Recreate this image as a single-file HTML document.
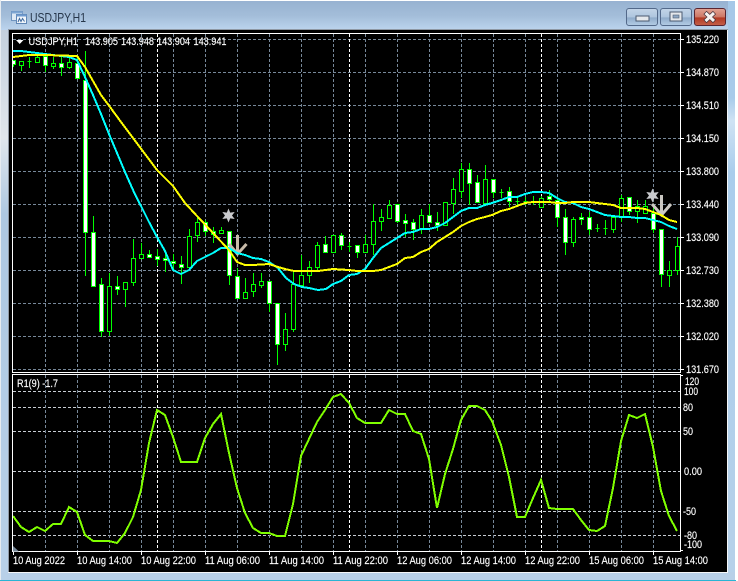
<!DOCTYPE html>
<html lang="en">
<head>
<meta charset="utf-8">
<title>USDJPY,H1</title>
<style>
html,body{margin:0;padding:0;background:#fff;width:738px;height:581px;overflow:hidden}
svg{display:block;position:absolute;left:0;top:0}
text{font-family:"Liberation Sans",sans-serif;font-size:11px;fill:#fff;stroke:#fff;stroke-width:.15}
</style>
</head>
<body>
<svg width="738" height="581" viewBox="0 0 738 581" xmlns="http://www.w3.org/2000/svg">
<defs>
<linearGradient id="tb" x1="0" y1="0" x2="0" y2="1"><stop offset="0" stop-color="#97b2d1"/><stop offset=".5" stop-color="#a3bdd9"/><stop offset="1" stop-color="#bcd4ee"/></linearGradient>
<linearGradient id="lf" x1="0" y1="0" x2="0" y2="1"><stop offset="0" stop-color="#c4d0dd"/><stop offset=".2" stop-color="#e0e6ec"/><stop offset=".34" stop-color="#aec8e2"/><stop offset="1" stop-color="#b8d0e8"/></linearGradient>
<linearGradient id="rf" x1="0" y1="0" x2="0" y2="1"><stop offset="0" stop-color="#a5c8e8"/><stop offset=".17" stop-color="#a8cbea"/><stop offset=".21" stop-color="#cfe3f4"/><stop offset=".3" stop-color="#a9cdec"/><stop offset="1" stop-color="#b6d1ea"/></linearGradient>
<linearGradient id="b1" x1="0" y1="0" x2="0" y2="1"><stop offset="0" stop-color="#c3d5e8"/><stop offset=".5" stop-color="#aec5de"/><stop offset=".55" stop-color="#8fabca"/><stop offset="1" stop-color="#b4cde6"/></linearGradient>
<linearGradient id="b2" x1="0" y1="0" x2="0" y2="1"><stop offset="0" stop-color="#e2a495"/><stop offset=".5" stop-color="#cd7765"/><stop offset=".55" stop-color="#b23a24"/><stop offset="1" stop-color="#c4604a"/></linearGradient>
<clipPath id="cm"><rect x="13" y="34" width="667" height="338"/></clipPath>
<clipPath id="ci"><rect x="13" y="375" width="667" height="176"/></clipPath>
</defs>

<!-- window frame -->
<rect x="0" y="0" width="738" height="581" fill="#fff"/>
<path d="M3 1H731Q735 1 735 5V580H1V4Q1 1 3 1Z" fill="#b8d0e8"/>
<rect x="1" y="1" width="734" height="29" fill="url(#tb)"/>
<rect x="1" y="30" width="8" height="542" fill="url(#lf)"/>
<rect x="728" y="1" width="7" height="571" fill="url(#rf)"/>
<rect x="0" y="0" width="1" height="580" fill="#e6ebf0"/>
<rect x="1" y="572" width="734" height="8" fill="#b8d0e8"/>
<rect x="0" y="580" width="736" height="1" fill="#2ab4d4"/>

<!-- client area -->
<rect x="8" y="29" width="720" height="544" fill="#8f98a4"/>
<rect x="727" y="30" width="1" height="542" fill="#f4f6f8"/>
<rect x="8" y="572" width="720" height="1" fill="#f4f6f8"/>
<rect x="9" y="30" width="718" height="542" fill="#000"/>

<!-- title icon -->
<g>
<rect x="11.5" y="11.5" width="11" height="9" fill="#dfe9f5" stroke="#6f94c0"/>
<rect x="11.5" y="11.5" width="11" height="2" fill="#7ea6d4"/>
<rect x="16.5" y="14.5" width="10" height="9" fill="#f2f6fb" stroke="#5f86b5"/>
<rect x="16.5" y="14.5" width="10" height="2" fill="#6f9bd0"/>
<path d="M18 22L19.5 18.5L21 21.5L22.5 18.5L24.5 21.5" fill="none" stroke="#3f6a9f" stroke-width="1"/>
</g>
<text x="30" y="22" textLength="56" lengthAdjust="spacingAndGlyphs" style="font-size:13px;fill:#26364a;stroke:none">USDJPY,H1</text>

<!-- buttons -->
<rect x="626.5" y="8.5" width="31" height="17" rx="2.5" fill="url(#b1)" stroke="#53698a"/>
<rect x="636" y="16" width="13" height="5" fill="#e4e8ec" stroke="#4b5a70"/>
<rect x="660.5" y="8.5" width="31" height="17" rx="2.5" fill="url(#b1)" stroke="#53698a"/>
<rect x="670" y="12" width="12" height="9" fill="#e4e8ec" stroke="#4b5a70"/>
<rect x="673" y="15" width="6" height="3" fill="#8ea7c4" stroke="#4b5a70" stroke-width=".6"/>
<rect x="694.5" y="8.5" width="31" height="17" rx="2.5" fill="url(#b2)" stroke="#5a2530"/>
<path d="M705 12.5L714.5 21.5M714.5 12.5L705 21.5" stroke="#45303a" stroke-width="4.5" fill="none"/>
<path d="M705.5 13L714 21M714 13L705.5 21" stroke="#f6f2f0" stroke-width="3" fill="none"/>

<!-- chart frames -->
<g fill="none" stroke="#fff" stroke-width="1" shape-rendering="crispEdges">
<rect x="12.5" y="33.5" width="668" height="339"/>
<rect x="12.5" y="374.5" width="668" height="177"/>
</g>

<!-- grid main -->
<g clip-path="url(#cm)" shape-rendering="crispEdges" fill="none" stroke-width="1">
<path stroke="#778899" stroke-dasharray="3 2" d="M13 39.5H680M13 72.5H680M13 105.5H680M13 138.5H680M13 171.5H680M13 204.5H680M13 237.5H680M13 270.5H680M13 303.5H680M13 336.5H680M13 369.5H680"/>
<path stroke="#778899" stroke-dasharray="3 2" d="M45.5 34V372M77.5 34V372M109.5 34V372M141.5 34V372M173.5 34V372M205.5 34V372M237.5 34V372M269.5 34V372M301.5 34V372M333.5 34V372M365.5 34V372M397.5 34V372M429.5 34V372M461.5 34V372M493.5 34V372M525.5 34V372M557.5 34V372M589.5 34V372M621.5 34V372M653.5 34V372"/>
<path stroke="#fff" stroke-dasharray="3 2" d="M157.5 34V372M349.5 34V372M541.5 34V372"/>
</g>

<!-- candles -->
<g clip-path="url(#cm)" shape-rendering="crispEdges" stroke="#00ff00" stroke-width="1">
<path fill="none" d="M13.5 60V67M21.5 61V71M29.5 57V68M37.5 52V62M45.5 56V72M53.5 57V69M61.5 57V76M69.5 57V69M77.5 56V78M85.5 51V276M93.5 216V287M101.5 278V337M109.5 273V336M117.5 276V295M125.5 282V307M133.5 239V286M141.5 243V258M149.5 250V258M157.5 249V266M165.5 250V272M173.5 254V270M181.5 256V284M189.5 229V267M197.5 217V242M205.5 220V236M213.5 227V243M221.5 227V233M229.5 231V285M237.5 268V299M245.5 278V298M253.5 273V297M261.5 273V288M269.5 281V312M277.5 303V365M285.5 313V351M293.5 272V332M301.5 255V288M309.5 261V283M317.5 242V270M325.5 236V252M333.5 235V252M341.5 233V250M349.5 242V252M357.5 245V258M365.5 235V252M373.5 204V255M381.5 209V231M389.5 200V218M397.5 204V223M405.5 214V237M413.5 219V240M421.5 209V234M429.5 204V222M437.5 212V231M445.5 202V225M453.5 178V214M461.5 163V198M469.5 163V205M477.5 175V202M485.5 165V203M493.5 179V198M501.5 189V198M509.5 187V207M517.5 197V205M525.5 197V205M533.5 196V205M541.5 196V207M549.5 190V203M557.5 197V227M565.5 209V255M573.5 217V247M581.5 213V225M589.5 212V235M597.5 224V232M605.5 220V235M613.5 215V233M621.5 195V222M629.5 197V215M637.5 200V223M645.5 200V213M653.5 205V233M661.5 229V287M669.5 261V287M677.5 237V275"/>
<path fill="#000" d="M19.5 61.5h4v4h-4zM35.5 57.5h4v5h-4zM51.5 63.5h4v3h-4zM67.5 62.5h4v5h-4zM107.5 286.5h4v45h-4zM123.5 282.5h4v7h-4zM131.5 258.5h4v24h-4zM139.5 254.5h4v4h-4zM187.5 236.5h4v31h-4zM195.5 222.5h4v13h-4zM219.5 230.5h4v3h-4zM243.5 292.5h4v6h-4zM251.5 284.5h4v7h-4zM259.5 281.5h4v4h-4zM283.5 329.5h4v15h-4zM291.5 284.5h4v45h-4zM299.5 275.5h4v10h-4zM307.5 267.5h4v8h-4zM315.5 245.5h4v22h-4zM331.5 235.5h4v17h-4zM363.5 244.5h4v8h-4zM371.5 221.5h4v23h-4zM379.5 217.5h4v4h-4zM387.5 205.5h4v13h-4zM419.5 215.5h4v14h-4zM443.5 202.5h4v23h-4zM451.5 189.5h4v14h-4zM459.5 169.5h4v22h-4zM483.5 179.5h4v24h-4zM539.5 198.5h4v9h-4zM571.5 219.5h4v23h-4zM611.5 217.5h4v12h-4zM619.5 198.5h4v19h-4zM635.5 206.5h4v5h-4zM643.5 206.5h4v7h-4zM667.5 270.5h4v5h-4zM675.5 246.5h4v24h-4z"/>
<path fill="none" d="M27.5 61.5h4M347.5 246.5h4M499.5 192.5h4M515.5 201.5h4M523.5 201.5h4M531.5 201.5h4M595.5 228.5h4M603.5 228.5h4"/>
<path fill="#fff" d="M11.5 60.5h4v4h-4zM43.5 56.5h4v9h-4zM59.5 63.5h4v4h-4zM75.5 63.5h4v15h-4zM83.5 80.5h4v152h-4zM91.5 232.5h4v54h-4zM99.5 284.5h4v47h-4zM115.5 286.5h4v3h-4zM147.5 254.5h4v3h-4zM155.5 256.5h4v3h-4zM163.5 258.5h4v2h-4zM171.5 261.5h4v2h-4zM179.5 264.5h4v3h-4zM203.5 222.5h4v9h-4zM211.5 231.5h4v3h-4zM227.5 231.5h4v44h-4zM235.5 276.5h4v22h-4zM267.5 281.5h4v22h-4zM275.5 303.5h4v41h-4zM323.5 244.5h4v8h-4zM339.5 235.5h4v10h-4zM355.5 245.5h4v7h-4zM395.5 204.5h4v17h-4zM403.5 220.5h4v3h-4zM411.5 222.5h4v7h-4zM427.5 215.5h4v7h-4zM435.5 222.5h4v3h-4zM467.5 169.5h4v14h-4zM475.5 182.5h4v20h-4zM491.5 179.5h4v13h-4zM507.5 191.5h4v10h-4zM547.5 196.5h4v3h-4zM555.5 200.5h4v17h-4zM563.5 217.5h4v25h-4zM579.5 217.5h4v2h-4zM587.5 217.5h4v12h-4zM627.5 197.5h4v14h-4zM651.5 213.5h4v16h-4zM659.5 229.5h4v45h-4z"/>
</g>

<!-- markers -->
<g fill="none" stroke-width="3">
<path stroke="#c8bba9" d="M237.5 235V254M229 244L237.5 254L246.5 244"/>
<path stroke="#cbc8c3" d="M661.5 195V215M652 204L661.5 215L671 204"/>
</g>
<g fill="#c9cacd">
<path d="M228.5 208.5L230.2 212.6L234.7 212L232 215.5L234.7 219L230.2 218.4L228.5 222.5L226.8 218.4L222.3 219L225 215.5L222.3 212L226.8 212.6Z"/>
<path d="M652.5 188.5L654.2 192.6L658.7 192L656 195.5L658.7 199L654.2 198.4L652.5 202.5L650.8 198.4L646.3 199L649 195.5L646.3 192L650.8 192.6Z"/>
</g>

<!-- MAs -->
<g clip-path="url(#cm)" fill="none" stroke-width="2" stroke-linejoin="miter" shape-rendering="crispEdges">
<polyline stroke="#00ffff" points="13,51 21,51 29,52 37,53 45,54 53,55 61,56 69,57 77,60 85,77 93,95 101,114 109,134 117,153 125,172 133,190 141,206 149,222 157,237 165,251 173,270 181,274 189,270 197,261 205,257 213,253 221,248 229,248 237,253 245,255 253,258 261,259 269,262 278,268 286,278 294,284 302,287 309,288 318,290 326,289 333,284 341,281 349,275 357,274 365,269 373,258 381,248 389,243 397,238 405,233 413,232 421,229 429,229 437,227 445,223 453,217 461,211 469,208 477,208 485,205 492,203 501,200 509,197 517,197 525,194 533,192 541,192 549,193 557,198 565,202 573,203 581,207 589,209 597,212 605,215 613,216 621,217 629,217 637,218 645,218 653,220 661,222 669,226 677,229"/>
<polyline stroke="#ffff00" points="13,57 21,56 29,55 45,55 77,56 85,67 93,81 101,95 110,107 121,122 133,138 145,154 157,170 173,186 185,203 197,216 213,233 229,250 237,262 245,265 253,265 269,264 278,267 285,269 294,271 302,271 309,271 318,271 333,269 349,270 357,271 373,271 381,270 389,267 397,264 405,258 413,257 421,252 429,249 437,242 445,237 453,232 461,226 469,222 477,219 485,217 492,215 501,211 509,209 517,206 525,203 533,202 541,202 549,202 557,203 565,203 573,202 581,202 589,202 597,203 605,204 613,205 621,208 629,208 637,208 645,209 653,212 661,215 669,220 677,222"/>
</g>

<!-- grid indicator -->
<g clip-path="url(#ci)" shape-rendering="crispEdges" fill="none" stroke-width="1">
<path stroke="#c8cdd3" stroke-dasharray="3 2" d="M13 391.5H680M13 407.5H680M13 431.5H680M13 471.5H680M13 511.5H680M13 535.5H680"/>
<path stroke="#778899" stroke-dasharray="3 2" d="M45.5 375V551M77.5 375V551M109.5 375V551M141.5 375V551M173.5 375V551M205.5 375V551M237.5 375V551M269.5 375V551M301.5 375V551M333.5 375V551M365.5 375V551M397.5 375V551M429.5 375V551M461.5 375V551M493.5 375V551M525.5 375V551M557.5 375V551M589.5 375V551M621.5 375V551M653.5 375V551"/>
<path stroke="#fff" stroke-dasharray="3 2" d="M157.5 375V551M349.5 375V551M541.5 375V551"/>
</g>
<polyline clip-path="url(#ci)" fill="none" stroke="#80ff00" stroke-width="2" shape-rendering="crispEdges" points="13,516 21,527 29,532 37,527 45,531 53,524 61,524 69,507 77,512 85,535 93,541 101,541 109,541 117,543 125,533 133,517 141,490 149,443 157,410 165,415 173,437 181,462 189,462 197,462 205,438 213,424 221,414 229,453 237,488 245,513 253,528 261,533 269,533 277,536 285,536 293,504 301,456 309,439 317,422 325,410 333,397 341,394 349,403 357,418 365,423 373,423 381,423 389,410 397,414 405,414 413,431 421,434 429,459 437,508 445,474 453,449 461,420 469,406 477,406 485,410 492,421 501,445 509,477 517,517 525,517 533,498 541,480 549,508 557,509 565,509 573,509 581,520 589,530 597,531 605,526 613,488 621,441 629,415 637,418 645,414 653,447 661,491 669,516 677,531"/>
<path d="M13 546L19 551.5H13Z" fill="#778899"/>

<!-- ticks -->
<path shape-rendering="crispEdges" stroke="#fff" stroke-width="1" fill="none" d="M681 39.5h3M681 72.5h3M681 105.5h3M681 138.5h3M681 171.5h3M681 204.5h3M681 237.5h3M681 270.5h3M681 303.5h3M681 336.5h3M681 369.5h3M681 375.5h2M681 550.5h2M13.5 552v3M77.5 552v3M141.5 552v3M205.5 552v3M269.5 552v3M333.5 552v3M397.5 552v3M461.5 552v3M525.5 552v3M589.5 552v3M653.5 552v3"/>

<!-- header text -->
<path d="M16 40H23.5L19.7 44Z" fill="#fff"/>
<text x="28.5" y="45" textLength="49.5" lengthAdjust="spacingAndGlyphs">USDJPY,H1</text>
<text x="85" y="45" textLength="33" lengthAdjust="spacingAndGlyphs">143.905</text>
<text x="121" y="45" textLength="33" lengthAdjust="spacingAndGlyphs">143.948</text>
<text x="157" y="45" textLength="33" lengthAdjust="spacingAndGlyphs">143.904</text>
<text x="193.5" y="45" textLength="33" lengthAdjust="spacingAndGlyphs">143.941</text>
<text x="17" y="387" textLength="41" lengthAdjust="spacingAndGlyphs">R1(9) -1.7</text>

<!-- price labels -->
<text x="686" y="43" textLength="33" lengthAdjust="spacingAndGlyphs">135.220</text>
<text x="686" y="76" textLength="33" lengthAdjust="spacingAndGlyphs">134.870</text>
<text x="686" y="109" textLength="33" lengthAdjust="spacingAndGlyphs">134.510</text>
<text x="686" y="142" textLength="33" lengthAdjust="spacingAndGlyphs">134.150</text>
<text x="686" y="175" textLength="33" lengthAdjust="spacingAndGlyphs">133.800</text>
<text x="686" y="208" textLength="33" lengthAdjust="spacingAndGlyphs">133.440</text>
<text x="686" y="241" textLength="33" lengthAdjust="spacingAndGlyphs">133.090</text>
<text x="686" y="274" textLength="33" lengthAdjust="spacingAndGlyphs">132.730</text>
<text x="686" y="307" textLength="33" lengthAdjust="spacingAndGlyphs">132.380</text>
<text x="686" y="340" textLength="33" lengthAdjust="spacingAndGlyphs">132.020</text>
<text x="686" y="373" textLength="33" lengthAdjust="spacingAndGlyphs">131.670</text>

<!-- indicator labels -->
<text x="685" y="385" textLength="14" lengthAdjust="spacingAndGlyphs">120</text>
<text x="684" y="395" textLength="14" lengthAdjust="spacingAndGlyphs">100</text>
<text x="683" y="411" textLength="10" lengthAdjust="spacingAndGlyphs">80</text>
<text x="683" y="435" textLength="10" lengthAdjust="spacingAndGlyphs">50</text>
<text x="684" y="475" textLength="18" lengthAdjust="spacingAndGlyphs">0.00</text>
<text x="683" y="515" textLength="13" lengthAdjust="spacingAndGlyphs">-50</text>
<text x="684" y="539" textLength="13" lengthAdjust="spacingAndGlyphs">-80</text>
<text x="684" y="548" textLength="18" lengthAdjust="spacingAndGlyphs">-100</text>

<!-- time labels -->
<text x="13" y="564" textLength="52" lengthAdjust="spacingAndGlyphs">10 Aug 2022</text>
<text x="77" y="564" textLength="55" lengthAdjust="spacingAndGlyphs">10 Aug 14:00</text>
<text x="141" y="564" textLength="55" lengthAdjust="spacingAndGlyphs">10 Aug 22:00</text>
<text x="205" y="564" textLength="55" lengthAdjust="spacingAndGlyphs">11 Aug 06:00</text>
<text x="269" y="564" textLength="55" lengthAdjust="spacingAndGlyphs">11 Aug 14:00</text>
<text x="333" y="564" textLength="55" lengthAdjust="spacingAndGlyphs">11 Aug 22:00</text>
<text x="397" y="564" textLength="55" lengthAdjust="spacingAndGlyphs">12 Aug 06:00</text>
<text x="461" y="564" textLength="55" lengthAdjust="spacingAndGlyphs">12 Aug 14:00</text>
<text x="525" y="564" textLength="55" lengthAdjust="spacingAndGlyphs">12 Aug 22:00</text>
<text x="589" y="564" textLength="55" lengthAdjust="spacingAndGlyphs">15 Aug 06:00</text>
<text x="653" y="564" textLength="55" lengthAdjust="spacingAndGlyphs">15 Aug 14:00</text>
</svg>
</body>
</html>
